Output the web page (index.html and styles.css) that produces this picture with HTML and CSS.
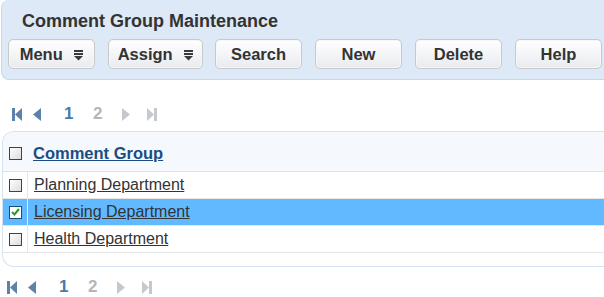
FILE: index.html
```html
<!DOCTYPE html>
<html>

<head>
  <meta charset="utf-8" />
  <title>Comment Group Maintenance</title>
  <link rel="stylesheet" href="styles.css">
</head>

<body>
  <div class="panel">
    <h1 class="title">Comment Group Maintenance</h1>
    <div class="toolbar">
      <button class="btn">Menu <svg class="drop" width="9" height="11" viewBox="0 0 9 11"><rect x="0" y="0" width="9" height="2" /><rect x="0" y="3" width="9" height="2" /><path d="M0 6h9l-4.5 4.5z" /></svg></button>
      <button class="btn wide">Assign <svg class="drop" width="9" height="11" viewBox="0 0 9 11"><rect x="0" y="0" width="9" height="2" /><rect x="0" y="3" width="9" height="2" /><path d="M0 6h9l-4.5 4.5z" /></svg></button>
      <button class="btn">Search</button>
      <button class="btn">New</button>
      <button class="btn">Delete</button>
      <button class="btn">Help</button>
    </div>
  </div>

  <div class="pager top">
    <svg class="nav first" width="10" height="13" viewBox="0 0 10 13"><rect x="0" y="0" width="3" height="13" /><path d="M10 0v13L3 6.5z" /></svg>
    <svg class="nav prev" width="8" height="13" viewBox="0 0 8 13"><path d="M8 0v13L0 6.5z" /></svg>
    <span class="pg cur">1</span>
    <span class="pg">2</span>
    <svg class="nav next" width="8" height="13" viewBox="0 0 8 13"><path d="M0 0v13l8-6.5z" /></svg>
    <svg class="nav last" width="10" height="13" viewBox="0 0 10 13"><path d="M0 0v13l7-6.5z" /><rect x="7" y="0" width="3" height="13" /></svg>
  </div>

  <div class="grid">
    <div class="row head">
      <div class="chk"><span class="box"></span></div>
      <div class="cell"><a class="hlink">Comment Group</a></div>
    </div>
    <div class="row">
      <div class="chk"><span class="box"></span></div>
      <div class="cell"><a class="link">Planning Department</a></div>
    </div>
    <div class="row sel">
      <div class="chk"><span class="box checked"><svg width="9" height="8" viewBox="0 0 9 8"><path d="M1 4l2.5 2.5L8 1" fill="none" stroke="#2a9a2a" stroke-width="2" /></svg></span></div>
      <div class="cell"><a class="link">Licensing Department</a></div>
    </div>
    <div class="row">
      <div class="chk"><span class="box"></span></div>
      <div class="cell"><a class="link">Health Department</a></div>
    </div>
    <div class="foot"></div>
  </div>

  <div class="pager bottom">
    <svg class="nav first" width="10" height="13" viewBox="0 0 10 13"><rect x="0" y="0" width="3" height="13" /><path d="M10 0v13L3 6.5z" /></svg>
    <svg class="nav prev" width="8" height="13" viewBox="0 0 8 13"><path d="M8 0v13L0 6.5z" /></svg>
    <span class="pg cur">1</span>
    <span class="pg">2</span>
    <svg class="nav next" width="8" height="13" viewBox="0 0 8 13"><path d="M0 0v13l8-6.5z" /></svg>
    <svg class="nav last" width="10" height="13" viewBox="0 0 10 13"><path d="M0 0v13l7-6.5z" /><rect x="7" y="0" width="3" height="13" /></svg>
  </div>
</body>

</html>
```

FILE: styles.css
```css
body {
  margin: 0;
  font-family: "Liberation Sans", Arial, sans-serif;
  color: #333;
  background: #fff;
  overflow: hidden;
}

.panel {
  margin-left: 1px;
  height: 79px;
  background-color: #dde9f6;
  border: 1px solid #c3d8ee;
  border-right: none;
  border-top: none;
  border-radius: 8px 0 0 8px;
}

.title {
  margin: 0;
  padding: 10px 0 0 20px;
  font-size: 18px;
  font-weight: bold;
  line-height: 22px;
  color: #333;
}

.toolbar {
  display: flex;
  gap: 13px;
  padding: 7px 0 0 6px;
  white-space: nowrap;
}

.btn {
  flex: none;
  width: 87px;
  height: 30px;
  padding: 0;
  border: 1px solid #c9c9c9;
  border-radius: 5px;
  background: linear-gradient(#ffffff, #e8ebef);
  box-shadow: inset 0 0 0 1px #f7f7f7;
  font-family: "Liberation Sans", Arial, sans-serif;
  font-size: 16.5px;
  font-weight: bold;
  color: #333;
}

.btn.wide {
  width: 95px;
  margin-right: -1px;
}

.drop {
  margin-left: 7px;
  fill: #3a3a3a;
  vertical-align: -1px;
}

.pager {
  display: flex;
  align-items: center;
  height: 20px;
}

.pager.top {
  padding: 24px 0 0 12px;
}

.pager.bottom {
  padding: 10px 0 0 7px;
}

.nav.first,
.nav.prev {
  fill: #5d82aa;
}

.nav.next,
.nav.last {
  fill: #c5c9ce;
}

.nav.first {
  margin-right: 11px;
}

.nav.prev {
  margin-right: 23px;
}

.nav.next {
  margin-right: 17px;
}

.pg {
  width: 29px;
  font-size: 17px;
  font-weight: bold;
  color: #b5b5b5;
}

.pg.cur {
  color: #4a79aa;
}

.grid {
  margin: 7px 0 0 2px;
  border: 1px solid #d5e2ef;
  border-right: none;
  border-radius: 12px 0 0 12px;
  overflow: hidden;
}

.row {
  display: flex;
  height: 26px;
  border-bottom: 1px solid #e6e6e6;
}

.row.head {
  height: 35px;
  padding-top: 4px;
  background-color: #f5f9fd;
  border-bottom: 1px solid #d5e2ef;
}

.row.sel {
  background-color: #61baff;
}

.chk {
  width: 24px;
  flex: none;
  display: flex;
  align-items: center;
  justify-content: center;
  border-right: 1px solid #e6e6e6;
}

.row.head .chk {
  border-right: none;
}

.box {
  width: 11px;
  height: 11px;
  border: 1px solid #1f4a78;
  background: linear-gradient(135deg, #ffffff, #dcdcdc);
  display: flex;
  align-items: center;
  justify-content: center;
}

.box.checked {
  background: #fff;
}

.cell {
  display: flex;
  align-items: center;
  padding-left: 6px;
}

.hlink {
  font-size: 16.5px;
  font-weight: bold;
  color: #1b4d82;
  text-decoration: underline;
}

.link {
  font-size: 16px;
  color: #333;
  text-decoration: underline;
}

.foot {
  height: 13px;
}
```
